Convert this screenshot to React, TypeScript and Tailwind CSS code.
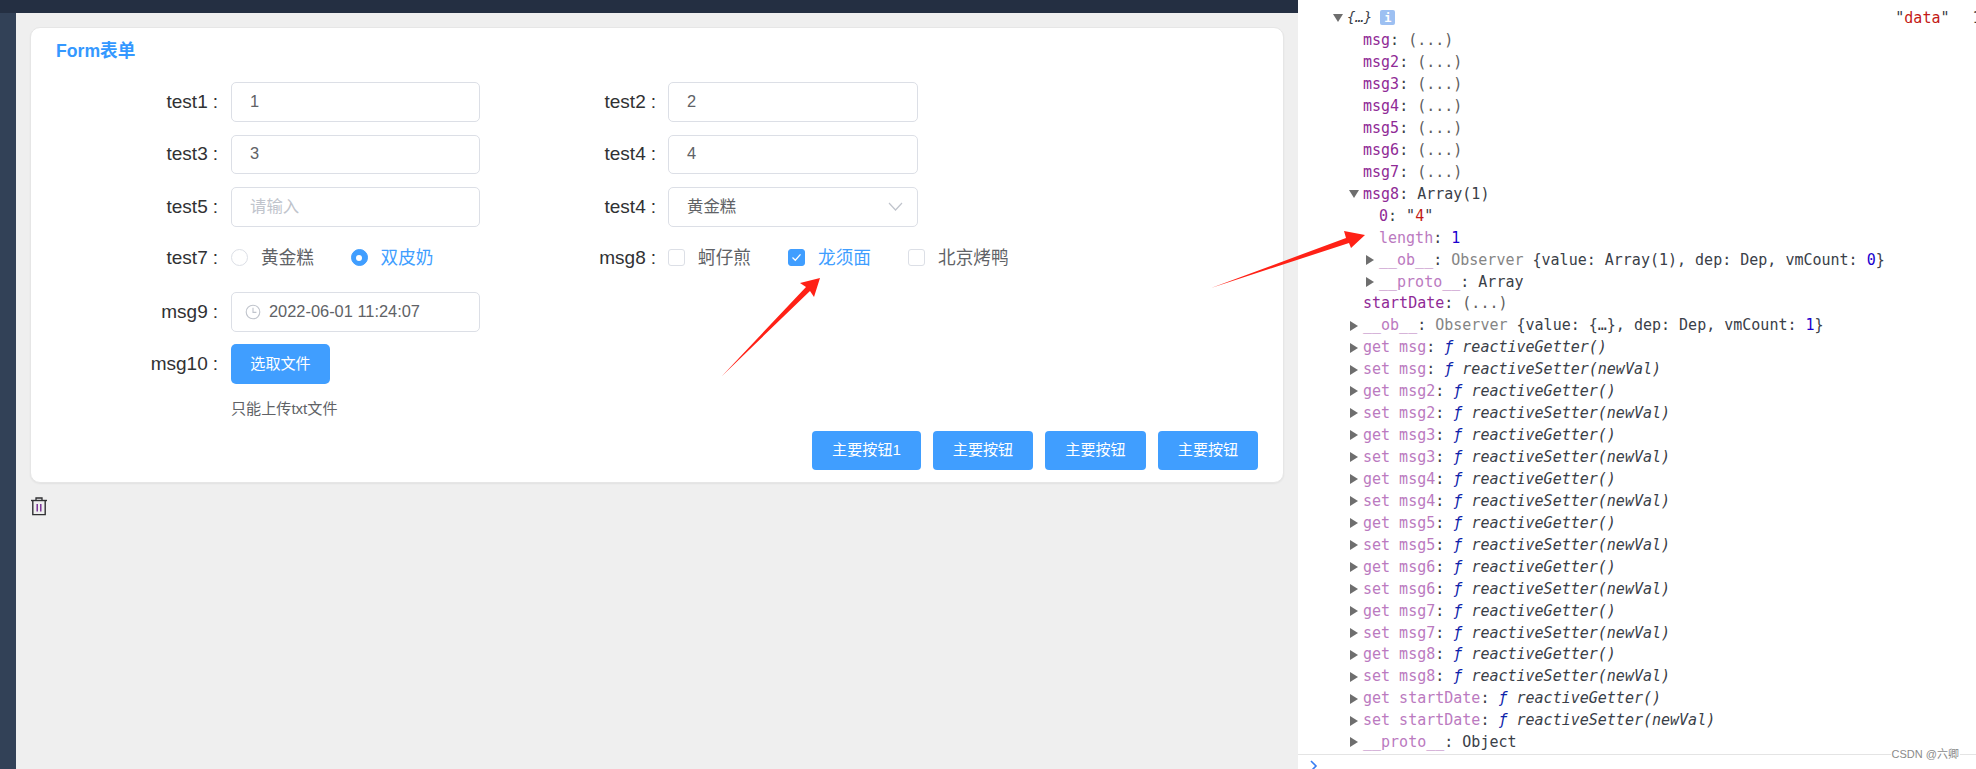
import React from "react";

const sans = "font-['Liberation_Sans','Noto_Sans_CJK_SC',sans-serif]";

function Label({ text, width, gap }: { text: string; width: string; gap: string }) {
  return (
    <div className={`${width} ${gap} shrink-0 flex justify-end items-center text-[19px] text-[#303133]`}>
      <span>{text}</span>
      <span className="ml-[5px]">:</span>
    </div>
  );
}

function Box({ children, width }: { children?: React.ReactNode; width: string }) {
  return (
    <div className={`${width} h-[39.5px] shrink-0 flex items-center pl-[18px] pr-[14px] pb-[2px] border border-[#dcdfe6] rounded-[5px] bg-white text-[16.4px] text-[#606266]`}>
      {children}
    </div>
  );
}

function Row({ children, className = "mb-[12.5px]" }: { children: React.ReactNode; className?: string }) {
  return <div className={`flex items-center h-[40px] ${className}`}>{children}</div>;
}

function Radio({ checked, text, className }: { checked?: boolean; text: string; className: string }) {
  return (
    <div className={`flex items-center ${className}`}>
      <span className={`w-[17px] h-[17px] rounded-full flex items-center justify-center border ${checked ? "bg-[#409eff] border-[#409eff]" : "bg-white border-[#dcdfe6]"}`}>
        {checked && <span className="w-[6px] h-[6px] rounded-full bg-white" />}
      </span>
      <span className={`ml-[13px] text-[17.64px] ${checked ? "text-[#409eff]" : "text-[#606266]"}`}>{text}</span>
    </div>
  );
}

function Check({ checked, text, className }: { checked?: boolean; text: string; className: string }) {
  return (
    <div className={`flex items-center ${className}`}>
      <span className={`w-[17px] h-[17px] rounded-[3px] flex items-center justify-center border ${checked ? "bg-[#409eff] border-[#409eff]" : "bg-white border-[#dcdfe6]"}`}>
        {checked && (
          <svg width="11" height="11" viewBox="0 0 11 11" fill="none">
            <path d="M1.5 5.5 L4.3 8.2 L9.5 2.4" stroke="white" strokeWidth="1.3" />
          </svg>
        )}
      </span>
      <span className={`ml-[13px] text-[17.64px] ${checked ? "text-[#409eff]" : "text-[#606266]"}`}>{text}</span>
    </div>
  );
}

function PrimaryButton({ text, width }: { text: string; width: string }) {
  return (
    <div className={`${width} h-[39px] rounded-[4px] bg-[#409eff] text-white text-[15.1px] flex items-center justify-center`}>{text}</div>
  );
}

const P = ({ c }: { c: string }) => <span className="text-[#8f2a96]">{c}</span>;
const Dim = ({ c }: { c: string }) => <span className="text-[#bb7abf]">{c}</span>;
const V = ({ c }: { c: string }) => <span className="text-[#3a4048]">{c}</span>;
const G = ({ c }: { c: string }) => <span className="text-[#858585]">{c}</span>;

function Tri({ dir }: { dir?: "down" | "right" }) {
  return (
    <span className="w-[14px] shrink-0 flex items-center">
      {dir === "right" && <span className="ml-[1px] w-0 h-0 border-y-[5px] border-y-transparent border-l-[8px] border-l-[#6e6e6e]" />}
      {dir === "down" && <span className="w-0 h-0 border-x-[5px] border-x-transparent border-t-[8px] border-t-[#6e6e6e]" />}
    </span>
  );
}

function CRow({ level, dir, children }: { level: 0 | 1 | 2; dir?: "down" | "right"; children: React.ReactNode }) {
  const pad = level === 0 ? "pl-[35px]" : level === 1 ? "pl-[51px]" : "pl-[67px]";
  return (
    <div className={`flex items-center h-[21.95px] shrink-0 whitespace-pre overflow-hidden ${pad}`}>
      <Tri dir={dir} />
      <span>{children}</span>
    </div>
  );
}

function Accessor({ kind, name, arg }: { kind: string; name: string; arg: string }) {
  return (
    <CRow level={1} dir="right">
      <Dim c={`${kind} ${name}`} />
      <V c=": " />
      <span className="italic text-[#0d22aa]">ƒ </span>
      <span className="italic text-[#3a4048]">{kind === "get" ? "reactiveGetter" : "reactiveSetter"}({arg})</span>
    </CRow>
  );
}

const names = ["msg", "msg2", "msg3", "msg4", "msg5", "msg6", "msg7", "msg8", "startDate"];

function Console() {
  return (
    <div className="flex-1 min-w-0 h-full bg-white pt-[6px] overflow-hidden font-['DejaVu_Sans_Mono','Noto_Sans_CJK_SC',monospace] text-[15px] flex flex-col relative">
      <div className="flex items-center h-[23.5px] shrink-0 whitespace-pre overflow-hidden pl-[35px]">
        <Tri dir="down" />
        <span className="italic text-[#3a4048] shrink-0 text-[14px]">{"{…}"}</span>
        <span className="ml-[8px] w-[15px] h-[15px] shrink-0 rounded-[2px] bg-[#9dc0f2] text-white text-[12px] font-bold flex items-center justify-center">i</span>
        <span className="ml-[500px] shrink-0 text-[#3a4048]">"<span className="text-[#c41a16]">data</span>"</span>
        <span className="ml-[23px] shrink-0 text-[#3a4048]">1</span>
      </div>
      {["msg", "msg2", "msg3", "msg4", "msg5", "msg6", "msg7"].map((n) => (
        <CRow key={n} level={1}>
          <P c={n} />
          <V c=": " />
          <span className="text-[#5e5e5e]">(...)</span>
        </CRow>
      ))}
      <CRow level={1} dir="down">
        <P c="msg8" />
        <V c=": Array(1)" />
      </CRow>
      <CRow level={2}>
        <P c="0" />
        <V c=": " />
        <V c={'"'} />
        <span className="text-[#c41a16]">4</span>
        <V c={'"'} />
      </CRow>
      <CRow level={2}>
        <Dim c="length" />
        <V c=": " />
        <span className="text-[#1c00cf]">1</span>
      </CRow>
      <CRow level={2} dir="right">
        <Dim c="__ob__" />
        <V c=": " />
        <G c="Observer " />
        <V c="{value: Array(1), dep: Dep, vmCount: " />
        <span className="text-[#1c00cf]">0</span>
        <V c="}" />
      </CRow>
      <CRow level={2} dir="right">
        <Dim c="__proto__" />
        <V c=": Array" />
      </CRow>
      <CRow level={1}>
        <P c="startDate" />
        <V c=": " />
        <span className="text-[#5e5e5e]">(...)</span>
      </CRow>
      <CRow level={1} dir="right">
        <Dim c="__ob__" />
        <V c=": " />
        <G c="Observer " />
        <V c="{value: {…}, dep: Dep, vmCount: " />
        <span className="text-[#1c00cf]">1</span>
        <V c="}" />
      </CRow>
      {names.map((n) => (
        <React.Fragment key={n}>
          <Accessor kind="get" name={n} arg="" />
          <Accessor kind="set" name={n} arg="newVal" />
        </React.Fragment>
      ))}
      <CRow level={1} dir="right">
        <Dim c="__proto__" />
        <V c=": Object" />
      </CRow>
      <div className="mt-[1px] border-t border-[#e4e4e4] pl-[11px] pt-[4px] flex-1">
        <svg width="10" height="14" viewBox="0 0 10 14" fill="none">
          <path d="M2 2 L7 7 L2 12" stroke="#367cf1" strokeWidth="1.6" />
        </svg>
      </div>
      <span className={`absolute right-[16px] top-[746px] bg-white px-[1px] text-[11px] leading-[16px] text-[#8a8a8a] ${sans}`}>CSDN @六卿</span>
    </div>
  );
}

export default function App() {
  return (
    <div className={`relative flex w-[1976px] h-[769px] overflow-hidden bg-white ${sans}`}>
      <div className="w-[1298px] h-full shrink-0 flex flex-col">
        <div className="h-[13px] shrink-0 bg-[#242f42]" />
        <div className="flex flex-1 min-h-0">
          <div className="w-[16px] shrink-0 bg-[#324157]" />
          <div className="flex-1 bg-[#efefef] pt-[13.5px] pl-[14px] pr-[14px]">
            <div className="h-[456.5px] bg-white border border-[#e6e6e6] rounded-[10px] shadow-[0_1px_2px_rgba(0,0,0,0.06)] pl-[25px] pr-[25px] pt-[12px]">
              <div className="h-[24px] flex items-center text-[17.64px] font-bold text-[#3498ff]">Form表单</div>
              <div className="pt-[18.5px]">
                <Row>
                  <Label text="test1" width="w-[162px]" gap="mr-[13px]" />
                  <Box width="w-[249px]">1</Box>
                  <Label text="test2" width="w-[176px]" gap="mr-[12px]" />
                  <Box width="w-[250px]">2</Box>
                </Row>
                <Row>
                  <Label text="test3" width="w-[162px]" gap="mr-[13px]" />
                  <Box width="w-[249px]">3</Box>
                  <Label text="test4" width="w-[176px]" gap="mr-[12px]" />
                  <Box width="w-[250px]">4</Box>
                </Row>
                <Row>
                  <Label text="test5" width="w-[162px]" gap="mr-[13px]" />
                  <Box width="w-[249px]"><span className="text-[#c0c4cc]">请输入</span></Box>
                  <Label text="test4" width="w-[176px]" gap="mr-[12px]" />
                  <Box width="w-[250px]">
                    <span>黄金糕</span>
                    <svg className="ml-auto" width="15" height="9" viewBox="0 0 15 9" fill="none">
                      <path d="M1 1 L7.5 8 L14 1" stroke="#c0c4cc" strokeWidth="1.2" />
                    </svg>
                  </Box>
                </Row>
                <Row className="mb-[12.5px] pb-[3px]">
                  <Label text="test7" width="w-[162px]" gap="mr-[13px]" />
                  <div className="w-[249px] shrink-0 flex items-center">
                    <Radio text="黄金糕" className="w-[119.5px]" />
                    <Radio checked text="双皮奶" className="" />
                  </div>
                  <Label text="msg8" width="w-[176px]" gap="mr-[12px]" />
                  <div className="flex items-center">
                    <Check text="蚵仔煎" className="w-[120px]" />
                    <Check checked text="龙须面" className="w-[120px]" />
                    <Check text="北京烤鸭" className="" />
                  </div>
                </Row>
                <Row className="mb-[12px]">
                  <Label text="msg9" width="w-[162px]" gap="mr-[13px]" />
                  <div className="w-[249px] h-[39.5px] shrink-0 flex items-center pl-[13px] pb-[1px] border border-[#dcdfe6] rounded-[5px] text-[16.4px] text-[#606266]">
                    <svg className="shrink-0" width="16" height="16" viewBox="0 0 16 16" fill="none">
                      <circle cx="8" cy="8" r="6.8" stroke="#c0c4cc" strokeWidth="1.1" />
                      <path d="M8 3.8 V8.4 H11.4" stroke="#c0c4cc" strokeWidth="1.1" />
                    </svg>
                    <span className="ml-[8px]">2022-06-01 11:24:07</span>
                  </div>
                </Row>
                <Row className="mb-0">
                  <Label text="msg10" width="w-[162px]" gap="mr-[13px]" />
                  <div className="w-[99px] h-[40px] rounded-[5px] bg-[#409eff] text-white text-[15.1px] flex items-center justify-center">选取文件</div>
                </Row>
                <div className="h-[20px] mt-[14.5px] pl-[175px] text-[15.1px] leading-[20px] text-[#606266] overflow-hidden">只能上传txt文件</div>
                <div className="flex justify-end gap-[12px] mt-[12px]">
                  <PrimaryButton text="主要按钮1" width="w-[109px]" />
                  <PrimaryButton text="主要按钮" width="w-[100px]" />
                  <PrimaryButton text="主要按钮" width="w-[101px]" />
                  <PrimaryButton text="主要按钮" width="w-[100px]" />
                </div>
              </div>
            </div>
            <div className="mt-[14px]">
              <svg width="18" height="19" viewBox="0 0 18 19" fill="none">
                <path d="M6 3 V1 H12 V3" stroke="#303133" strokeWidth="1.3" />
                <path d="M1 3.5 H17" stroke="#303133" strokeWidth="1.4" />
                <path d="M2.8 3.5 V17.6 H15.2 V3.5" stroke="#303133" strokeWidth="1.4" />
                <path d="M7.2 7 V14.5 M10.8 7 V14.5" stroke="#6a1b8a" strokeWidth="1.3" />
              </svg>
            </div>
          </div>
        </div>
      </div>
      <Console />
      <svg className="absolute left-0 top-0 pointer-events-none" width="1976" height="769" viewBox="0 0 1976 769">
        <polygon points="722,376 806,287 800,283 820,278 814,297 810,291" fill="#ff2116" />
        <polygon points="1211,288 1346,238 1344,231 1365,235 1351,248 1349,243" fill="#ff2116" />
      </svg>
    </div>
  );
}
